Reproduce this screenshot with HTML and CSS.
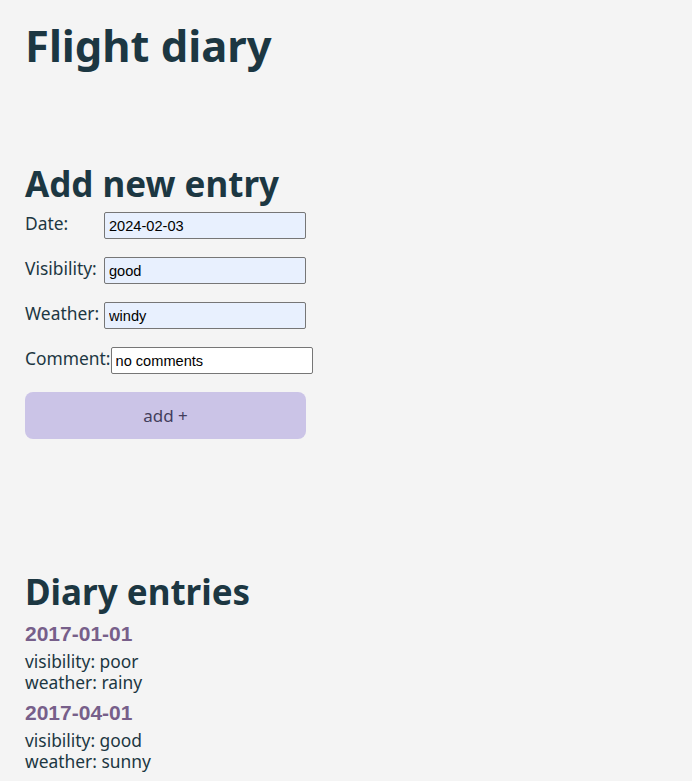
FILE: index.html
```html
<!DOCTYPE html>
<html>
<head>
<meta charset="utf-8">
<link rel="stylesheet" href="styles.css">
</head>
<body>
<div class="app">
  <h1 class="title">Flight diary</h1>
  <section class="new-entry">
    <h2 class="section-title">Add new entry</h2>
    <form class="entry-form">
      <div class="row">
        <label class="lbl">Date:</label>
        <input class="field filled" type="text" value="2024-02-03">
      </div>
      <div class="row">
        <label class="lbl">Visibility:</label>
        <input class="field filled" type="text" value="good">
      </div>
      <div class="row">
        <label class="lbl">Weather:</label>
        <input class="field filled" type="text" value="windy">
      </div>
      <div class="row">
        <label class="lbl lbl-auto">Comment:</label>
        <input class="field" type="text" value="no comments">
      </div>
      <button class="add-btn" type="button">add +</button>
    </form>
  </section>
  <section class="entries">
    <h2 class="section-title">Diary entries</h2>
    <div class="entry">
      <h3 class="entry-date">2017-01-01</h3>
      <p class="entry-text">visibility: poor<br>weather: rainy</p>
    </div>
    <div class="entry">
      <h3 class="entry-date">2017-04-01</h3>
      <p class="entry-text">visibility: good<br>weather: sunny</p>
    </div>
  </section>
</div>
</body>
</html>
```

FILE: styles.css
```css
html, body {
  margin: 0;
  padding: 0;
  background: #f4f4f4;
}
body {
  font-family: "Noto Sans", "Open Sans", sans-serif;
  color: #1c3742;
}
.app {
  padding: 18px 25px 0 25px;
}
.title {
  font-size: 43.5px;
  font-weight: 700;
  line-height: 54px;
  margin: 0;
}
.new-entry {
  margin-top: 90px;
}
.section-title {
  font-size: 35px;
  font-weight: 700;
  line-height: 44px;
  margin: 0;
}
.new-entry .section-title {
  margin-bottom: 6px;
}
.entry-form {
  display: flex;
  flex-direction: column;
  align-items: flex-start;
}
.row {
  display: flex;
  align-items: flex-start;
  margin-bottom: 18px;
}
.lbl {
  font-size: 17.4px;
  line-height: 22px;
  min-width: 79px;
  flex-shrink: 0;
}
.lbl-auto {
  min-width: 0;
}
.field {
  box-sizing: border-box;
  width: 202px;
  height: 27px;
  margin: 0;
  border: 1px solid #767676;
  border-radius: 2px;
  background: #ffffff;
  font-family: "Liberation Sans", Arial, sans-serif;
  font-size: 14.6px;
  color: #000;
  padding: 1px 4px 0 4px;
}
.field.filled {
  background: #e8f0fe;
}
.add-btn {
  width: 281px;
  height: 47px;
  border: none;
  border-radius: 8px;
  background: #cbc4e7;
  color: #433e5c;
  font-family: "Noto Sans", "Open Sans", sans-serif;
  font-size: 17px;
  padding: 0;
}
.entries {
  margin-top: 131px;
}
.entry-date {
  font-family: "Liberation Sans", Arial, sans-serif;
  font-size: 21px;
  font-weight: 700;
  color: #775f8a;
  margin: 8px 0 5px 0;
  line-height: 24px;
}
.entry-text {
  margin: 0;
  font-size: 17.4px;
  line-height: 21px;
}
```
